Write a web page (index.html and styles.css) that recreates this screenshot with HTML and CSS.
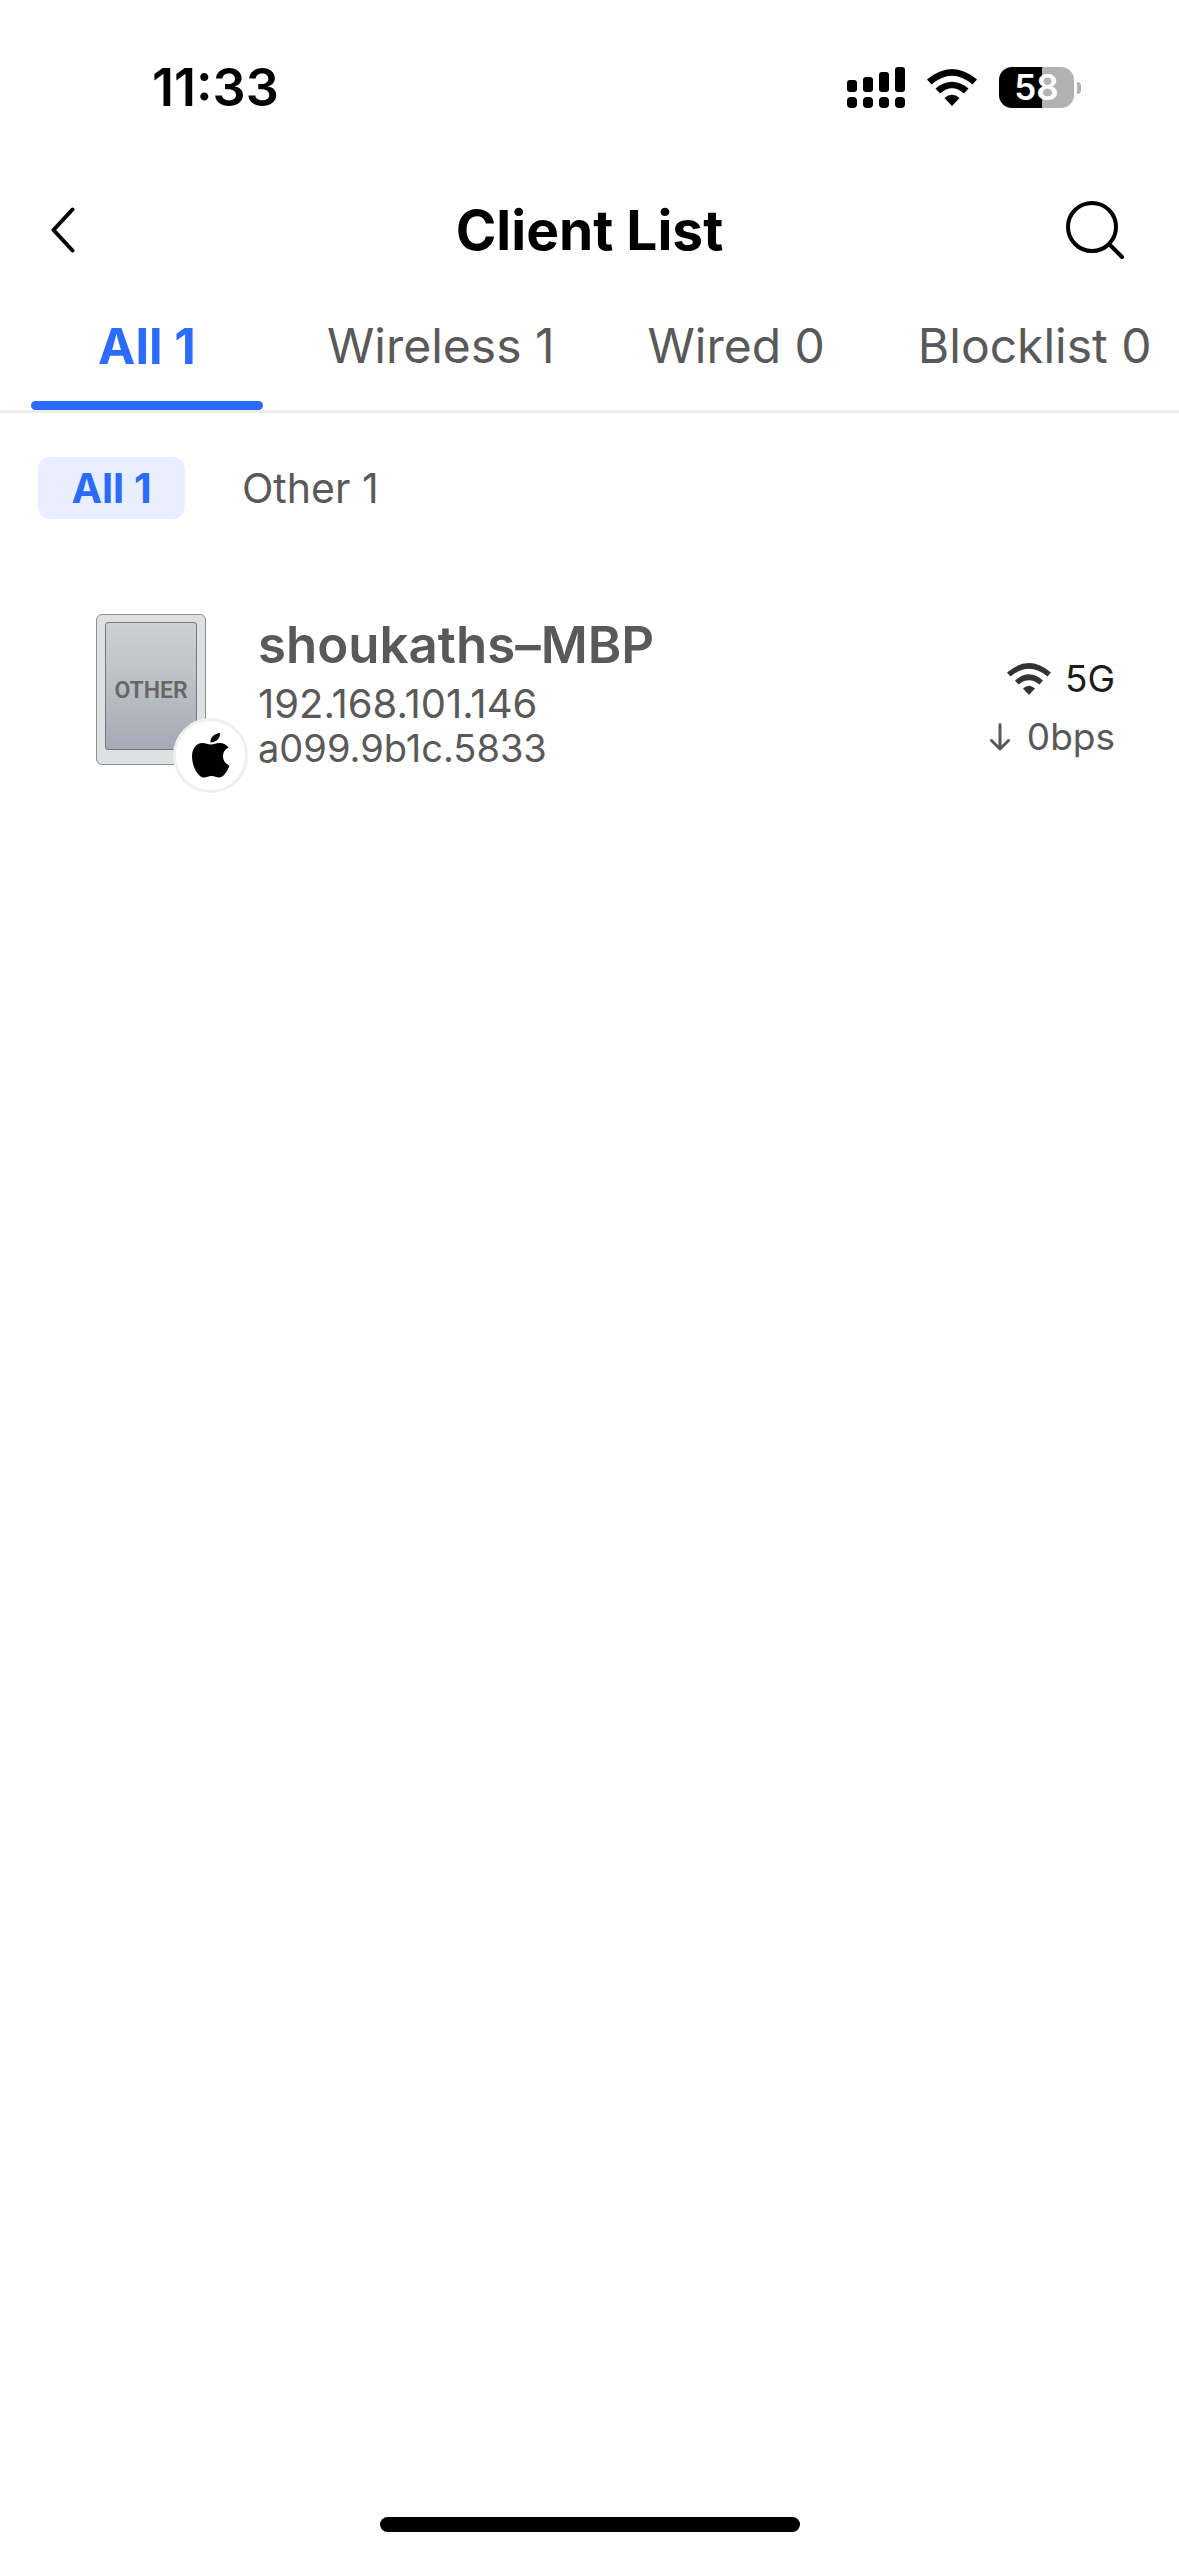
FILE: index.html
```html
<!DOCTYPE html>
<html lang="en">
<head>
<meta charset="utf-8">
<meta name="viewport" content="width=device-width, initial-scale=1">
<title>Client List</title>
<link rel="stylesheet" href="styles.css">
</head>
<body>
<div class="screen">
  <div class="status-bar">
    <time class="clock">11:33</time>
    <div class="indicators">
      <svg class="signal" viewBox="0 0 58 41" aria-label="Signal">
        <rect x="0" y="13" width="10" height="12" rx="3"/><rect x="16" y="10" width="10" height="15" rx="3"/><rect x="32" y="5" width="10" height="20" rx="3"/><rect x="48" y="0" width="10" height="25" rx="3"/>
        <rect x="0" y="30" width="10" height="11" rx="4"/><rect x="16" y="30" width="10" height="11" rx="4"/><rect x="32" y="30" width="10" height="11" rx="4"/><rect x="48" y="30" width="10" height="11" rx="4"/>
      </svg>
      <svg class="wifi" viewBox="0 0 50 37" aria-label="Wi-Fi">
        <path d="M0 10.500Q25-10.500 50 10.500L45.500 15.500Q25-2 4.500 15.500Z"/>
        <path d="M8.500 19.500Q25 6 41.500 19.500L37 24.500Q25 14 13 24.500Z"/>
        <path d="M17.500 29Q25 22.500 32.500 29L25 37Z"/>
      </svg>
      <div class="battery"><span class="battery-body">58</span><span class="battery-tip"></span></div>
    </div>
  </div>

  <header class="nav">
    <button class="nav-button" type="button" aria-label="Back">
      <svg class="back-icon" viewBox="0 0 24 46"><path d="M21.500 2.500L2.500 23L21.500 43.500"/></svg>
    </button>
    <h1 class="title">Client List</h1>
    <button class="nav-button nav-button-end" type="button" aria-label="Search">
      <svg class="search-icon" viewBox="0 0 62 58"><circle cx="26" cy="26" r="24"/><path d="M43.500 43.500L56 56"/></svg>
    </button>
  </header>

  <nav class="tabs">
    <button class="tab tab-active" type="button">All 1</button>
    <button class="tab" type="button">Wireless 1</button>
    <button class="tab" type="button">Wired 0</button>
    <button class="tab" type="button">Blocklist 0</button>
  </nav>

  <main class="content">
    <div class="filters">
      <button class="filter filter-active" type="button">All 1</button>
      <button class="filter" type="button">Other 1</button>
    </div>
    <ul class="clients">
      <li class="client">
        <div class="device">
          <div class="device-screen">OTHER</div>
          <div class="brand">
            <svg class="apple" viewBox="0 0 38 45" aria-label="Apple"><path d="M19 11.500C15.500 11.500 14 10 10.500 10C4 10 0 16 0 23.500C0 33 6 44.500 12 44.500C15 44.500 16 43 19.500 43C23 43 24 44.500 27 44.500C31.500 44.500 35.500 38 37.500 32.500C33 30.500 31 27.500 31 23C31 19 33 16.500 36.500 14.500C34.500 11.500 31.500 10 27.500 10C24 10 22 11.500 19 11.500ZM18.500 9.500C18 4.500 22.500 .5 28 0C28.500 5.500 24 9.500 18.500 9.500Z"/></svg>
          </div>
        </div>
        <div class="info">
          <h2 class="name">shoukaths–MBP</h2>
          <p class="detail detail-ip">192.168.101.146</p>
          <p class="detail">a099.9b1c.5833</p>
        </div>
        <div class="link">
          <p class="band">
            <svg class="band-wifi" viewBox="0 0 44 32" aria-label="Wireless"><path d="M0 9.500Q22-9.500 44 9.500L40.500 13.500Q22-2 3.500 13.500Z"/><path d="M8 17.500Q22 5 36 17.500L32.500 21.500Q22 13 11.500 21.500Z"/><path d="M16 25.500Q22 20 28 25.500L22 32Z"/></svg>
            5G
          </p>
          <p class="rate">
            <svg class="down" viewBox="0 0 20 28" aria-label="Download"><path d="M10 1.500V26M1.500 17.500L10 26L18.500 17.500"/></svg>
            0bps
          </p>
        </div>
      </li>
    </ul>
  </main>
  <div class="home-indicator"></div>
</div>
</body>
</html>
```

FILE: styles.css
```css
* { box-sizing: border-box; }

body {
  margin: 0;
  background: #fff;
  color: #595959;
  font-family: Inter, "Liberation Sans", sans-serif;
}

h1, h2, p, ul { margin: 0; padding: 0; }

button {
  padding: 0;
  border: 0;
  background: none;
  color: inherit;
  font: inherit;
  white-space: nowrap;
}

svg { display: block; flex: none; }

.screen {
  display: flex;
  flex-direction: column;
  min-height: 100vh;
}

.status-bar {
  display: flex;
  align-items: center;
  justify-content: space-between;
  height: 175px;
  padding: 0 98px 0 152px;
  color: #000;
}

.clock { font-size: 52px; font-weight: 600; }

.indicators { display: flex; align-items: center; gap: 22px; }
.signal { width: 58px; height: 41px; }
.wifi { width: 50px; height: 37px; }

.battery { display: flex; align-items: center; gap: 3px; }

.battery-body {
  width: 75px;
  border-radius: 13px;
  background: linear-gradient(90deg, #000 57%, #b2b2b2 57%);
  color: #fff;
  font-size: 35px;
  font-weight: 600;
  line-height: 41px;
  text-align: center;
}

.battery-tip {
  width: 4px;
  height: 12px;
  border-radius: 0 4px 4px 0;
  background: #b2b2b2;
}

.nav {
  display: grid;
  grid-template-columns: 1fr auto 1fr;
  align-items: center;
  height: 110px;
  padding: 0 51px;
  color: #000;
}

.nav-button { justify-self: start; }
.nav-button-end { justify-self: end; }
.title { font-size: 55px; font-weight: 700; line-height: 68px; }

.back-icon, .search-icon {
  fill: none;
  stroke: currentColor;
  stroke-width: 4;
  stroke-linecap: round;
  stroke-linejoin: round;
}
.back-icon { width: 24px; height: 46px; }
.search-icon { width: 62px; height: 58px; }

.tabs {
  display: flex;
  gap: 35px;
  padding-left: 31px;
  border-bottom: 3px solid #ededed;
  overflow: hidden;
}

.tab {
  position: relative;
  flex: none;
  padding: 31px 29px 34px;
  font-size: 48px;
  line-height: 60px;
}

.tab-active {
  min-width: 232px;
  color: #2c6bff;
  font-size: 50px;
  font-weight: 700;
}

.tab-active::after {
  content: "";
  position: absolute;
  inset: auto 0 0;
  height: 9px;
  border-radius: 5px;
  background: #2c6bff;
}

.content { flex: 1; padding: 44px 38px; }

.filters { display: flex; gap: 25px; }

.filter {
  padding: 0 32px;
  border-radius: 12px;
  font-size: 41px;
  line-height: 62px;
}

.filter-active {
  min-width: 147px;
  background: #e9efff;
  color: #2c6bff;
  font-weight: 700;
}

.clients { list-style: none; }

.client {
  display: flex;
  align-items: flex-start;
  padding: 95px 26px 0 58px;
}

.device {
  position: relative;
  flex: none;
  width: 110px;
  height: 151px;
  padding: 7px 8px 14px;
  border: 1px solid #8c9090;
  border-radius: 6px;
  background: #dde1e1;
}

.device-screen {
  height: 100%;
  border: 1px solid #73777d;
  border-radius: 3px;
  background: linear-gradient(#cdd0d4, #c0c5c8 35%, #a4abb5);
  color: #666;
  font-family: Roboto, sans-serif;
  font-size: 23px;
  font-weight: 600;
  line-height: 135px;
  text-align: center;
}

.brand {
  position: absolute;
  right: -43px;
  bottom: -29px;
  display: grid;
  place-items: center;
  width: 75px;
  height: 75px;
  border: 3px solid #efefef;
  border-radius: 50%;
  background: #fff;
}

.apple { width: 38px; height: 45px; }

.info { flex: 1; padding-left: 52px; }
.name { padding-bottom: 6px; font-size: 51px; font-weight: 600; line-height: 61px; }
.detail { font-size: 38px; line-height: 45px; }
.detail-ip { font-size: 40px; }

.link { padding-top: 36px; font-size: 37px; line-height: 58px; }
.band, .rate { display: flex; align-items: center; justify-content: flex-end; }
.band { gap: 14px; color: #1c1c1c; }
.rate { gap: 17px; }
.band-wifi { width: 44px; height: 32px; fill: #333; }

.down {
  width: 20px;
  height: 28px;
  fill: none;
  stroke: currentColor;
  stroke-width: 3;
  stroke-linecap: round;
  stroke-linejoin: round;
}

.home-indicator {
  align-self: center;
  width: 420px;
  max-width: 60%;
  height: 15px;
  margin-bottom: 24px;
  border-radius: 8px;
  background: #000;
}
```
